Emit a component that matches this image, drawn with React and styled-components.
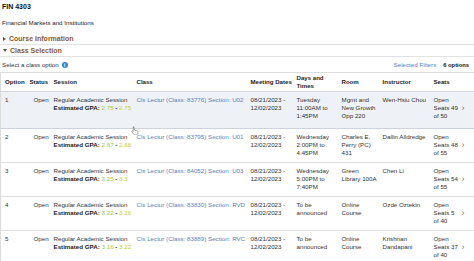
import React from "react";
import styled, { createGlobalStyle } from "styled-components";

const GlobalStyle = createGlobalStyle`
  body {
    margin: 0;
    background: #fff;
    font-family: "Liberation Sans", Arial, Helvetica, sans-serif;
    color: #222;
    -webkit-font-smoothing: antialiased;
  }
`;

const Page = styled.div`
  position: relative;
  width: 474px;
  padding-top: 3px;
  overflow: hidden;
`;

const Title = styled.div`
  padding-left: 2px;
  font-size: 7px;
  font-weight: bold;
  line-height: 8px;
  color: #111;
`;

const Subtitle = styled.div`
  margin-top: 8px;
  padding-left: 2px;
  font-size: 6.2px;
  line-height: 8px;
  color: #222;
`;

const SectionList = styled.div`
  margin-top: 6px;
`;

const Section = styled.div`
  display: flex;
  align-items: center;
  gap: 3px;
  height: 11px;
  padding-left: 3px;
  border-bottom: 1px solid #e2e2e2;
  font-size: 7px;
  font-weight: bold;
  color: #8c5a2c;
`;

const Caret = styled.span`
  width: 0;
  height: 0;
  border-style: solid;
  border-color: transparent;
  ${(p) =>
    p.open
      ? `border-width: 3px 2.5px 0 2.5px; border-top-color: #555;`
      : `border-width: 2.5px 0 2.5px 3px; border-left-color: #555;`}
`;

const Toolbar = styled.div`
  display: flex;
  align-items: center;
  margin-top: 4px;
  padding: 0 5px 0 2px;
  height: 8px;
  font-size: 6.2px;
  line-height: 8px;
`;

const Hint = styled.span`
  display: flex;
  align-items: center;
  gap: 3px;
  flex: 1;
  color: #333;
`;

const InfoDot = styled.span`
  display: inline-flex;
  align-items: center;
  justify-content: center;
  width: 6px;
  height: 6px;
  border-radius: 50%;
  background: #3d7fd1;
  color: #fff;
  font-size: 5px;
  font-weight: bold;
  line-height: 6px;
`;

const FilterLink = styled.span`
  color: #4f7fc3;
  margin-right: 7px;
`;

const Count = styled.span`
  font-weight: bold;
  font-size: 5.8px;
  color: #111;
`;

const Table = styled.table`
  margin-top: 3px;
  width: 474px;
  table-layout: fixed;
  border-collapse: collapse;
  border-top: 1px solid #dcdcdc;
  border-left: 1px solid #dcdcdc;
  font-size: 6.2px;
  line-height: 8px;
`;

const Th = styled.th`
  height: 18px;
  padding: 0 1px 0 ${(p) => p.pad || 3}px;
  text-align: left;
  vertical-align: middle;
  font-size: 6.1px;
  font-weight: bold;
  color: #222;
  white-space: ${(p) => (p.nowrap ? "nowrap" : "normal")};
  border-bottom: 1px solid #d4d8de;
`;

const Row = styled.tr`
  height: ${(p) => (p.selected ? 37 : 34)}px;
  background: ${(p) => (p.selected ? "#eef2f7" : "#fff")};
  border-bottom: 1px solid ${(p) => (p.selected ? "#cdd3dc" : "#e0e0e0")};
`;

const Td = styled.td`
  padding: 4px 1.5px 0 ${(p) => p.pad || 3}px;
  vertical-align: top;
  color: #333;
`;

const Bold = styled.span`
  font-weight: bold;
  color: #222;
`;

const Gpa = styled.span`
  color: ${(p) => p.tone};
`;

const ClassLink = styled.span`
  color: #5b7fb8;
  white-space: nowrap;
`;

const SeatsCell = styled.div`
  display: flex;
  align-items: center;
`;

const SeatsText = styled.div`
  width: 25px;
`;

const Chevron = styled.span`
  margin-left: 3px;
  font-size: 9px;
  color: #777;
`;

const Pointer = styled.svg`
  position: absolute;
  left: 131px;
  top: 126px;
  width: 8px;
  height: 9px;
`;

const rows = [
  {
    n: 1,
    gpa: ["2.75", "2.75"],
    cls: "83776",
    sec: "U02",
    days: ["Tuesday", "11:00AM to", "1:45PM"],
    room: "Mgmt and New Growth Opp 220",
    instructor: "Wen-Hsiu Chou",
    seats: ["49", "50"],
  },
  {
    n: 2,
    gpa: ["2.67", "2.68"],
    cls: "83795",
    sec: "U01",
    days: ["Wednesday", "2:00PM to", "4:45PM"],
    room: "Charles E. Perry (PC) 431",
    instructor: "Dallin Alldredge",
    seats: ["48", "55"],
  },
  {
    n: 3,
    gpa: ["3.25", "3.3"],
    cls: "84052",
    sec: "U03",
    days: ["Wednesday", "5:00PM to", "7:40PM"],
    room: "Green Library 100A",
    instructor: "Chen Li",
    seats: ["54", "55"],
  },
  {
    n: 4,
    gpa: ["3.22", "3.26"],
    cls: "83830",
    sec: "RVD",
    days: ["To be", "announced"],
    room: "Online Course",
    instructor: "Ozde Oztekin",
    seats: ["5", "40"],
  },
  {
    n: 5,
    gpa: ["3.16", "3.22"],
    cls: "83889",
    sec: "RVC",
    days: ["To be", "announced"],
    room: "Online Course",
    instructor: "Krishnan Dandapani",
    seats: ["37", "40"],
  },
];

const widths = [26, 24, 83, 114, 46, 45, 41, 51, 44];

export default function App() {
  return (
    <Page>
      <GlobalStyle />
      <Title>FIN 4303</Title>
      <Subtitle>Financial Markets and Institutions</Subtitle>
      <SectionList>
        <Section>
          <Caret />
          Course Information
        </Section>
        <Section>
          <Caret open />
          Class Selection
        </Section>
      </SectionList>
      <Toolbar>
        <Hint>
          Select a class option <InfoDot>i</InfoDot>
        </Hint>
        <FilterLink>Selected Filters</FilterLink>
        <Count>6 options</Count>
      </Toolbar>
      <Table>
        <colgroup>
          {widths.map((w, i) => (
            <col key={i} style={{ width: w }} />
          ))}
        </colgroup>
        <thead>
          <tr>
            <Th pad={4}>Option</Th>
            <Th>Status</Th>
            <Th>Session</Th>
            <Th>Class</Th>
            <Th nowrap>Meeting Dates</Th>
            <Th>Days and Times</Th>
            <Th>Room</Th>
            <Th>Instructor</Th>
            <Th>Seats</Th>
          </tr>
        </thead>
        <tbody>
          {rows.map((r) => (
            <Row key={r.n} selected={r.n === 1}>
              <Td pad={4}>{r.n}</Td>
              <Td pad={7}>Open</Td>
              <Td>
                Regular Academic Session
                <br />
                <Bold>Estimated GPA: </Bold>
                <Gpa tone="#a3c444">{r.gpa[0]}</Gpa>
                <Bold> - </Bold>
                <Gpa tone="#c2cd3e">{r.gpa[1]}</Gpa>
              </Td>
              <Td>
                <ClassLink>
                  Cls Lectur (Class: {r.cls}) Section: {r.sec}
                </ClassLink>
              </Td>
              <Td>
                08/21/2023 -
                <br />
                12/02/2023
              </Td>
              <Td>
                {r.days.map((d, i) => (
                  <div key={i}>{d}</div>
                ))}
              </Td>
              <Td>{r.room}</Td>
              <Td>{r.instructor}</Td>
              <Td>
                <SeatsCell>
                  <SeatsText>
                    Open Seats {r.seats[0]} of {r.seats[1]}
                  </SeatsText>
                  <Chevron>›</Chevron>
                </SeatsCell>
              </Td>
            </Row>
          ))}
        </tbody>
      </Table>
      <Pointer viewBox="0 0 16 18">
        <path
          d="M5 1.5c.8 0 1.5.7 1.5 1.5v5l1-.2c.8 0 1.4.5 1.5 1.1l.9-.1c.8 0 1.4.5 1.5 1.1l.8-.1c.9 0 1.6.7 1.6 1.6v2.6c0 2.2-1.8 4-4 4H8.5c-1.3 0-2.4-.6-3.2-1.6L1.8 11.6c-.4-.6-.3-1.4.3-1.8.6-.4 1.3-.3 1.7.2l.7.9V3c0-.8.7-1.5 1.5-1.5z"
          fill="#fff"
          stroke="#555"
          strokeWidth="1"
        />
      </Pointer>
    </Page>
  );
}
